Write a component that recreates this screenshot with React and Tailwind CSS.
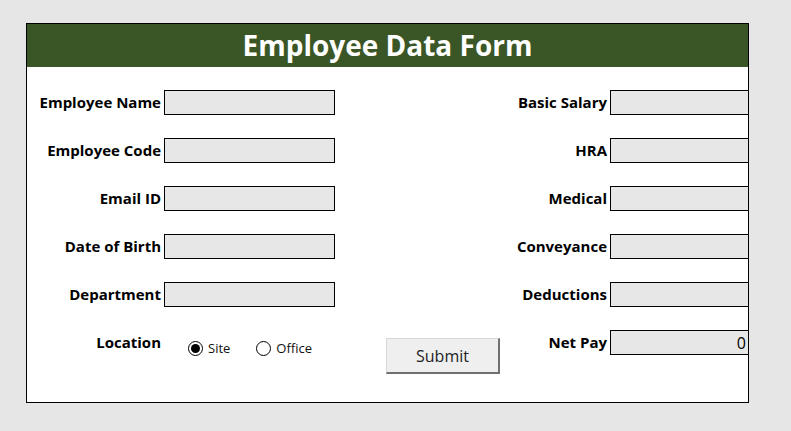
import React from 'react';

const left = ['Employee Name', 'Employee Code', 'Email ID', 'Date of Birth', 'Department'];
const right = ['Basic Salary', 'HRA', 'Medical', 'Conveyance', 'Deductions'];

const font = { fontFamily: '"Open Sans", Lato, sans-serif' };

function Box({ children, wide }) {
  return (
    <div
      className={
        'h-[25px] border border-black bg-[#e7e7e7] ' +
        (wide ? 'w-[138px] border-r-0 ' : 'w-[171px] ') +
        'flex items-center justify-end pr-[2px] text-[16px] text-black'
      }
    >
      {children}
    </div>
  );
}

function Label({ children }) {
  return <div className="text-right text-[15px] font-bold text-black leading-none whitespace-nowrap">{children}</div>;
}

function Radio({ checked, label }) {
  return (
    <label className="flex items-center gap-[5px] text-[13px] text-[#111] leading-none">
      <span className="w-[15px] h-[15px] rounded-full border border-black bg-white flex items-center justify-center">
        {checked && <span className="w-[9px] h-[9px] rounded-full bg-black" />}
      </span>
      {label}
    </label>
  );
}

export default function App() {
  return (
    <div className="w-[791px] h-[431px] bg-[#e6e6e6] pt-[23px] pl-[26px]" style={font}>
      <div className="w-[723px] h-[380px] border border-black bg-white overflow-hidden">
        <div className="h-[43px] bg-[#3b5626] flex items-center justify-center">
          <h1 className="text-white text-[28px] font-bold leading-none -mt-[2px]">Employee Data Form</h1>
        </div>
        <div className="pt-[23px] grid grid-cols-[134px_171px_1fr_138px] auto-rows-[25px] gap-x-[3px] gap-y-[23px] items-center">
          {left.map((l, i) => (
            <React.Fragment key={l}>
              <Label>{l}</Label>
              <Box />
              <Label>{right[i]}</Label>
              <Box wide />
            </React.Fragment>
          ))}
          <Label>Location</Label>
          <div className="h-[25px] flex items-end gap-[26px] pl-[24px] -mb-[2px]">
            <Radio checked label="Site" />
            <Radio label="Office" />
          </div>
          <div className="h-[25px] flex items-start justify-between">
            <button className="mt-[8px] ml-[48px] w-[114px] h-[36px] shrink-0 bg-[#efefef] border border-[#d8d8d8] border-r-2 border-b-2 border-r-[#707070] border-b-[#707070] text-[16px] text-[#222]">
              Submit
            </button>
            <div className="self-center">
              <Label>Net Pay</Label>
            </div>
          </div>
          <Box wide>0</Box>
        </div>
      </div>
    </div>
  );
}
